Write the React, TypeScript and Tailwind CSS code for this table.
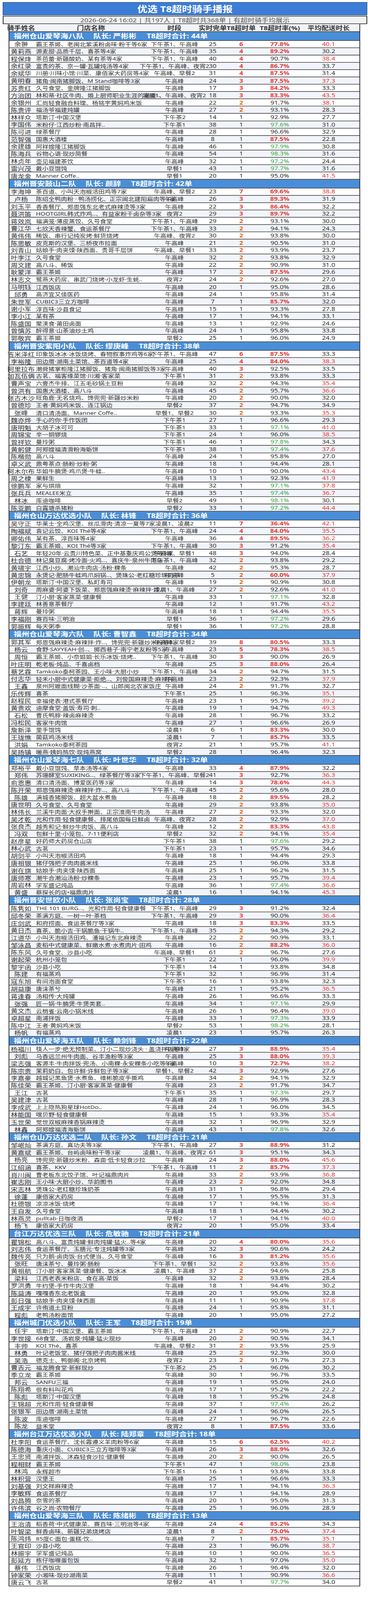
import React, { useLayoutEffect, useState } from "react";

type Team = { name: string; lead: string; total: number; rows: string };

const teams: Team[] = [
  {
    name: "福州仓山爱琴海八队", lead: "严彬彬", total: 44, rows: `
余翀|霸王茶姬、老闽北紫溪粉卤味·粉干等6家|下午茶1、午高峰|25|6|77.8|40.1
黄莉燕|源麦甜·品质千层、喜茶等4家|下午茶1、午高峰|35|4|89.2|30.2
程保烽|茶芭蕾·新疆酸奶、某有茶等4家|下午茶1、午高峰|40|4|90.7|38.4
余红录|富贵的茶、京一罐·瓦罐炖汤等4家|下午茶1、午高峰、夜宵2|30|4|86.7|33.7
余斌华|川册·川味小馆·川菜、康佰家大药房等4家|午高峰、早餐2|31|4|87.5|31.4
黄明春|猪角·闽南猪脚饭、M Stand咖啡等3家|午高峰|24|3|87.5|37.3
苏贵红|久号食堂、金牌隆江猪脚饭|午高峰|17|3|84.2|33.3
方治团|林和蒂·社区牛肉、婚上厨师职业生涯的撤退!..|凌晨1、午高峰、夜宵2|18|3|83.3|43.5
余银州|汇尚轻食融合料理、杨铭宇黄焖鸡米饭|午高峰|22|2|91.7|38.1
陈贵评|福汤爷福建炖罐|午高峰|27|2|93.1|28.3
林祥众|塔斯汀·中国汉堡|下午茶2|14|1|92.9|27.7
李国伟|米粉仔·江西炒粉·南昌拌..|下午茶1|38|1|97.6|31.0
陈可进|绿茶餐厅|午高峰|28|1|96.6|32.9
范智强|国惠大酒楼|午高峰|8|1|87.5|22.8
余建雄|阿祥嫂隆江猪脚饭|午高峰|46|1|97.9|30.8
陈海兵|谷物心语·现炒简餐|午高峰|54|1|98.3|31.6
林贞年|壶见福建茶饮|午高峰|32|1|97.2|24.4
雷兴茂|戴小豆馄饨|早餐1|43|1|97.7|31.6
唐龙金|Manner Coffe..|早餐1|20|1|95.0|41.5`,
  },
  {
    name: "福州晋安鼓山二队", lead: "颜辞", total: 42, rows: `
李海坤|茶百道、小叫天泡椒活田鸡等7家|午高峰、早餐2|23|7|69.6|38.8
卢杨|陈绍全鸭肉粉 · 鸭汤捞化、正宗闽北建阳扁肉等3家|午高峰|26|3|89.3|31.9
刘玉平|香香餐厅、郑恩强东北老式麻辣烫等3家|午高峰|22|3|86.4|32.2
聂洪笛|HOOTGIRL韩式炸鸡..、有益家粉干卤杂等3家|夜宵2|29|3|89.7|32.2
蒋效岚|福满笼·薄皮蒸饺、久号食堂|下午茶1、午高峰|29|2|93.1|30.0
曹江华|七欣天香辣蟹、食运茶餐厅|下午茶1、午高峰|33|2|94.1|24.3
黄伟伟|稀饭、串行记纯炭烤·鲜货烧烤|午高峰、夜宵2|30|2|93.8|30.0
陈思敏|皮克斯的汉堡、三桥夜市拉面|午高峰|21|2|90.5|31.0
刘青山|姑娘手·肉夹馍·陕西面、贵哥千层饼|午高峰、早餐1|33|2|93.9|23.7
叶李江|久号食堂|午高峰|32|2|93.8|32.9
周文建|高八斗、稀饭|午高峰|22|2|90.9|31.0
耿蒙洋|霸王茶姬|午高峰|17|2|87.5|29.6
林志文|鹭燕大药房、串武门烧烤·小龙虾·生蚝..|夜宵2|24|2|92.6|27.0
马明钰|江西饭店|午高峰|20|1|95.0|28.6
邱勇|高济宜又佳医药|午高峰|24|1|95.8|31.4
朱世军|CUBIC3三立方咖啡|午高峰|7|1|85.7|32.0
谢小军|淳百味·沙县食记|午高峰|15|1|93.3|27.8
李小江|某有茶|午高峰|17|1|94.1|33.1
陈盛国|聚渼食·莆田卤面|午高峰|13|1|92.9|24.6
曾慎苏|醉得意·山茶油炒土鸡|午高峰|24|1|95.8|33.8
郭敬宾|霸王茶姬|早餐2|25|1|96.0|24.9`,
  },
  {
    name: "福州晋安紫阳小队", lead: "缪庚峰", total: 38, rows: `
吉米泽红|印象饭冰冰·冰饭烧烤、春物叙事炸鸡等6家|下午茶1、午高峰|47|6|87.5|33.3
李裕隆|田边厝·湖南土菜馆、茶百道等4家|午高峰|25|4|84.0|38.3
阿里拉布|潮舜猪掌柜隆江猪脚饭、猪角·闽南猪脚饭等3家|午高峰|40|3|92.5|33.5
加瓦伍俩|古茗、福客缘菜馆·川湘·客家菜|下午茶1|31|2|93.8|33.3
曹声宝|六壹杰牛排、江五毛砂锅土豆粉|午高峰|32|2|94.3|35.4
曾洪有|国惠大酒楼、高八斗|午高峰|45|2|95.7|36.6
张古木沙|旺角鹿·无名烧鸡、馋兜兜·新疆炒米粉|午高峰|20|2|90.0|32.0
曾德珍|王者·黄焖鸡米饭、连江锅边|早餐2|37|2|94.7|34.9
张峰|清口清汤面、Manner Coffe..|早餐1、早餐2|30|2|93.3|35.3
魏亦烨|手心的你·手作饭团|下午茶1|27|1|96.6|29.3
唐明魁|大胡子冰可可|下午茶1|33|1|97.1|41.0
周锦宝|辛一铜锣烧|下午茶1|24|1|96.0|38.5
曾祥钦|曼玲粥|下午茶1|46|1|97.8|34.3
黄躬健|阿郑嫂福清滑粉海蛎饼|下午茶1|38|1|97.4|37.6
陈楷勋|高八斗|午高峰|24|1|95.8|27.0
卓义武|鼎粤茶点·肠粉·炒粉·粥|午高峰|18|1|94.4|28.1
阿木尔布|华姐牛腩煲·鸡爪煲·牛蛙..|午高峰|10|1|90.0|43.4
周之棣|果鲜生|午高峰|13|1|92.3|41.9
徐鹏军|家与烘焙|午高峰|32|1|97.1|37.8
张兵兵|MEALEE米立|午高峰|35|1|97.4|36.7
林冰|库迪咖啡|早餐2|49|1|98.1|30.1
陈亚鹏|白露塘杀猪粉|早餐2|33|1|97.2|44.4`,
  },
  {
    name: "福州仓山万达优选小队", lead: "林锋", total: 36, rows: `
吴守正|华莱士·全鸡汉堡、丝瓜滑肉·清凉一夏等7家|凌晨1、凌晨2|11|7|36.4|42.1
陶福斌|袁记云饺、KOI Thé等4家|下午茶1、午高峰|24|4|84.0|35.5
卿佑伟|某有茶、淳百味等4家|午高峰|36|4|89.5|36.2
黎汀东|霸王茶姬、KOI Thé等3家|下午茶1、午高峰|30|3|91.2|35.4
石艺|年轻20年·云贵川特色菜、正中基重庆鸡公煲等3家|午高峰、早餐1|48|3|94.0|28.4
杜合德|林记臭豆腐·烤冷面·火鸡..、喜庆牛·泉州牛肉店|下午茶1、午高峰|32|2|93.8|29.2
黄啸宇|江西小炒、潮汕牛肉店·汤粉·粿条|午高峰|42|2|95.3|28.7
黄忠锦|永煲记·肥肠牛蛙鸡爪焖锅..、煲珠公·老红糖珍珠奶茶|午高峰|5|2|60.0|37.9
伊朝龙|塔斯汀·中国汉堡、私町寿司|午高峰|19|2|90.9|30.8
刘奇|周麻婆·阿婆下饭菜、郑恩强麻辣烫·麻辣拌·炸..|凌晨1、午高峰|27|2|92.6|41.0
王健|汀小厨·客家蒸菜·健康餐|午高峰|33|1|97.1|32.8
李建廷|林善意茶餐厅|午高峰|12|1|91.7|43.2
蒋辉|曼玲粥|午高峰|18|1|94.4|35.5
李福刚|赛百味·三明治|早餐1|36|1|97.2|29.6
郭振辉|每天粥季|早餐1|36|1|97.2|28.8`,
  },
  {
    name: "福州仓山爱琴海六队", lead: "曹智鑫", total: 34, rows: `
郭其军|郑恩强麻辣烫·麻辣拌·炸..、馋兜兜·新疆炒米粉等8家|午高峰、早餐2|39|8|80.5|33.3
杨云|食野·SAYYEAH·创..、掷西巷子·南宁老友粉等5家|午高峰|23|5|78.3|38.5
周恒|霸王茶姬、小奈姐姐·长乐冰饭·烧烤..|下午茶1、午高峰|30|3|90.0|26.9
叶庄明|乾老板·炖品、千喜卤档|午高峰|25|3|88.0|26.4
蔡艺霖|Tamkoko泰柯茶园、王小味·大厨小炒|下午茶1、午高峰|34|2|94.7|31.5
付志华|轻禾小厨中式健康菜·拒绝..、刘俊国麻辣烫·麻辣拌|午高峰|23|2|92.3|37.9
王鑫|泉州阿嬷面线糊·沙茶面·..、山郎闽北农家饭庄|午高峰|24|2|91.7|32.7
乐传辉|喜茶|下午茶1|25|1|96.3|35.1
赵程民|幸福佬表·港式茶餐厅|午高峰|23|1|95.7|39.2
黄贵欢|迪摩食堂·盖饭·寿司·刺..|午高峰|19|1|94.7|49.3
石松|曹氏鸭脖·辣卤麻辣烫|午高峰|28|1|96.7|33.2
冯松民|客家牛肉馆|午高峰|27|1|96.6|26.9
詹新泽|里手馄饨|凌晨1|6|1|83.3|30.0
王珑憔|菌菇鸡汤米线|凌晨1|7|1|85.7|33.5
洪娟|Tamkoko泰柯茶园|夜宵2|21|1|95.7|41.1
吴扬镇|暖燕·姨妈热饮·现炖燕窝|早餐2|28|1|96.4|32.3`,
  },
  {
    name: "福州仓山爱琴海七队", lead: "叶世华", total: 32, rows: `
郑裕平|戴小豆馄饨、草本汤等4家|午高峰|33|4|87.9|32.2
郑伟|苏珊酵室SUXIKING..、绿茶餐厅等3家|下午茶1、午高峰、早餐2|41|3|92.7|36.3
俞恩惠|清口清汤面、博爱医药等3家|午高峰|14|3|78.6|44.3
陈开荣|郑恩强麻辣烫·麻辣拌·炸..、高八斗|下午茶1、午高峰|45|2|95.6|28.0
陈雄|满城香猪脚饭、超大盆水煮鱼|午高峰|18|2|89.5|28.2
唐世明|久号食堂、久号食堂|午高峰|29|2|93.8|35.0
林伟长|兰溪牛肉面·大叔手擀面、正宗淮南牛肉汤|午高峰|27|2|93.3|32.0
吴才乾|光和作用·轻食健康餐、排尾依国每日鲜卤|午高峰、夜宵2|28|2|92.9|37.0
张良杰|越秀和记·鲜炒牛肉饭、高八斗|午高峰|12|2|83.3|43.8
冯双|包鲜十里·小笼包、7-11便利店|早餐2|32|2|94.1|35.4
赵彦星|好药师大药房仓山店|下午茶1|38|1|97.6|29.2
林心武|古茗|下午茶1|23|1|95.7|34.6
胡剑平|小叫天泡椒活田鸡|午高峰|18|1|94.4|29.3
唐祖银|猪仔强把子肉肉酱米线|午高峰|25|1|96.0|33.8
谢在旗|姑娘手·肉夹馍·陕西面|午高峰|25|1|96.2|31.5
唐师寒|潮牛合潮汕汤粉·炒粿条|午高峰|23|1|95.7|39.4
周岩林|学军盛记炖品|午高峰|36|1|97.4|36.6
黄盛|蔡探长的店•福鼎肉片|凌晨1|16|1|94.1|45.3`,
  },
  {
    name: "福州晋安世欧小队", lead: "张尚宝", total: 28, rows: `
陈隽如|THE 101 BURG..、光和作用·轻食健康餐|下午茶1、午高峰|29|3|91.2|32.4
邱冬荣|茶满方庭、一树一叶·茶档|下午茶1、午高峰|29|3|90.0|36.4
庄剑武|和府捞面、食运茶餐厅等3家|午高峰|18|3|83.3|33.5
黄日杰|喜茶、脆小吉·干锅脆鱼·干锅牛..|下午茶1、午高峰|35|2|94.3|29.2
江道华|小叫天泡椒活田鸡、潘福记东北麻辣烫|午高峰|22|2|90.9|33.1
邹泳昌|麦稻中式健康菜、鲜嫩水煮·水煮肉片·田鸡|午高峰|16|2|88.2|36.0
陈东风|久号食堂、沙县小吃|午高峰、早餐1|61|2|96.7|27.6
谢起荣|杭州小笼包|下午茶1|22|1|96.0|39.9
黎宇函|沙县小吃|下午茶1|14|1|93.8|34.8
陈建|有福蒸鸡|下午茶1|32|1|96.9|31.4
寇东旭|有间泡面食堂|下午茶1|16|1|93.8|32.3
胡益康|唐沫茶兮|午高峰|21|1|95.2|36.5
蒋逢春|汤相传·大炖罐|午高峰|26|1|96.6|33.3
张强|匠一锅·牛腩煲·牛煲类套..|午高峰|34|1|97.1|29.9
黄文杰|云梢雀·云南小锅米线|午高峰|26|1|96.4|39.0
卓超星|南浦拌饭|午高峰|33|1|97.3|33.9
陈中江|王者·黄焖鸡米饭|早餐2|53|1|98.2|28.1
杨帆|有福蒸鸡|凌晨1|23|1|95.7|26.3`,
  },
  {
    name: "福州仓山爱琴海五队", lead: "赖剑锋", total: 22, rows: `
杨福川|筷人一步·绝无预制菜、汀小二现炒浇头 · 盖浇拌饭等3家|午高峰|27|3|88.9|35.4
刘彪|马香远兰州牛肉面、谷丰渔粉等3家|午高峰|25|3|88.0|39.3
梁志强|客源丰·牛肉拌饭·兜汤、小南粿·永安粿条小吃等3家|午高峰|10|3|72.7|38.2
陈宗贵|茉莉奶白、包许鲜·许鲜包子等3家|早餐1、早餐2|42|3|92.9|27.6
李嘉豪|越城记黑鱼煲·水煮鱼、维彬脆皮手撕鸡|午高峰|34|2|94.1|32.9
陈佳荣|霸王茶姬、汀小厨·客家蒸菜·健康餐|午高峰|23|2|91.7|34.7
王江|古茗|下午茶1|35|1|97.3|29.7
吴建津|古茗|午高峰|28|1|96.9|28.3
李成武|上上隐热狗星球HotDo..|午高峰|24|1|96.0|34.5
林能国|嘿贝野·轻食健康餐|午高峰|15|1|93.3|35.4
玉世荣|觉世双椒麻辣香锅麻辣烫|午高峰|32|1|96.9|32.9
林鑫|阿郑嫂福清海蛎饼|午高峰|43|1|97.8|32.6`,
  },
  {
    name: "福州仓山万达优选二队", lead: "孙文", total: 21, rows: `
邹岷灿|茶满方庭、真功夫等3家|下午茶1、午高峰|27|3|88.9|31.2
黄嘉斌|霸王茶姬、台屿卤味粉干等3家|凌晨1、午高峰、夜宵2|61|3|95.1|34.3
杨亮|馋兜兜·新疆炒米粉、森亩·低卡轻食沙拉|午高峰|24|3|88.0|45.6
江绍涵|喜茶、KKV|下午茶1、午高峰|11|2|85.7|37.3
肖川闽|曹老板东北饺子馆、叶记福鼎肉片|午高峰|33|2|93.9|36.8
崔志刚|王小味·大厨小炒、华韵图书|午高峰|23|2|92.0|34.8
宋志林|煲珠公·老红糖珍珠奶茶|午高峰|31|1|96.8|29.4
徐蓬|康佰家大药房|午高峰|17|1|95.5|31.3
杜德银|凉凉冰饭·烧烤|午高峰|17|1|94.1|36.4
王自发|久号食堂|午高峰|18|1|94.4|30.2
林燕灵|pulltab·日咖夜酒|早餐2|17|1|94.1|40.0
杨飞|康佰家大药房|夜宵2|20|1|95.0|33.4`,
  },
  {
    name: "台江万达优选三队", lead: "危敏驰", total: 21, rows: `
瞿锦松|高八斗、富贵炖罐·鲜肉炖罐·猛火..等4家|午高峰|20|4|80.0|35.6
刘志伟|食运茶餐厅、玉膳元·专注炖罐等3家|午高峰|32|3|90.6|24.2
魏传亮|只为鹅·卤肉饭·台式便当、久号食堂|午高峰|16|3|81.2|35.6
张旺|唐沫茶兮、曼玲粥·肠粉|下午茶1、早餐1|32|2|93.8|35.6
黄祖航|汀小厨·客家蒸菜·健康餐、饭冰冰|凌晨1、午高峰|37|2|94.6|25.8
梁科|江西老表米粉店、食在高·菜饭|午高峰|32|2|93.8|28.4
罗洪勇|牛约堡-手作牛肉汉堡|午高峰|18|1|94.4|30.2
陈益涛|嘎嘎香东北老饭盒|午高峰|20|1|95.0|32.8
彭日强|姑娘手·肉夹馍·陕西面|午高峰|11|1|90.9|37.8
王成宇|许侑道土豆粉|午高峰|24|1|95.8|31.1
程彪|老鸭汤粉面馆|午高峰|20|1|95.0|27.2`,
  },
  {
    name: "福州城门优选小队", lead: "王军", total: 19, rows: `
任宇|塔斯汀·中国汉堡、霸王茶姬|下午茶1、午高峰|21|2|90.9|22.7
李世接|68食堂、汤岩泉·炖罐·猛火现炒|午高峰|20|2|90.5|34.1
丰帅|KOI Thé、喜茶|午高峰、早餐2|31|2|93.5|25.9
林勇|叶记老饭堂、猪仔强把子肉肉酱米线|午高峰|25|2|92.3|30.0
吴浩|德克士、鸭御阁·北京烤鸭|夜宵2|23|2|91.7|27.3
曹吉元|福龙腾食堂·新鲜现炒|下午茶2|25|1|96.0|30.2
季立龙|霸王茶姬|午高峰|30|1|96.7|33.5
邦云|SANFU三福|午高峰|19|1|95.0|24.0
陈翔希|很有料叫花鸡|午高峰|17|1|95.2|22.2
陈彪|塔斯汀·中国汉堡|午高峰|18|1|95.2|24.8
王锦超|光和作用·轻食健康餐|午高峰|37|1|97.4|26.2
张银军|田边厝·湖南土菜馆|午高峰|24|1|96.0|26.5
陈波|库迪咖啡|午高峰|27|1|96.7|22.6
陈龙|益禾堂|夜宵2|8|1|87.5|33.6`,
  },
  {
    name: "福州台江万达优选小队", lead: "陆郑章", total: 18, rows: `
杜李阳|食运茶餐厅、沈长霞遵义羊肉粉等6家|午高峰|15|6|62.5|40.2
陈德海|重庆小面、CUBIC3三立方咖啡等3家|午高峰|26|3|88.9|32.6
王忠贤|南浦拌饭、沐森轻食沙拉·健康餐|午高峰|20|2|90.0|26.5
程相财|霸王茶姬|下午茶1|47|1|98.0|23.8
林鸿|永辉超市|下午茶1|16|1|93.8|33.8
林积营|汉堡王|午高峰|25|1|96.6|33.3
刘基强|刘文祥麻辣烫|午高峰|17|1|94.1|36.3
李敏辉|食运茶餐厅|午高峰|17|1|94.1|28.9
刘昌腾|奈雪的茶|午高峰|20|1|95.0|31.3
许伟滨|谷之尚·农物餐厅|午高峰|25|1|96.0|28.9`,
  },
  {
    name: "福州仓山爱琴海三队", lead: "陈绪彬", total: 13, rows: `
王治清|稻香荷·中式健康菜、赛百味·三明治等4家|午高峰|24|4|85.2|34.3
叶智梁|鲜香卤味、新疆兄弟烧烤店|凌晨1|8|2|75.0|37.4
陈鸿炜|85度C·面包·蛋糕·饮..|午高峰|7|1|85.7|35.1
王官印|沙县小吃|午高峰|23|1|96.0|38.7
林振宇|学军盛记炖品|午高峰|10|1|90.0|36.5
彭延方|栋仔咖喱蛋包饭|午高峰|32|1|97.0|35.0
蔡伟|江西饭店|午高峰|26|1|96.4|32.0
钟家荣|小湘味-现炒湖南菜|午高峰|11|1|90.9|36.6
唐云飞|古茗|早餐2|41|1|97.7|34.0`,
  },
];

function countClass(n: number) {
  if (n >= 3) return "text-[#e53a3a] font-bold";
  if (n === 2) return "text-[#ea5e0c] font-bold";
  return "text-[#333333]";
}

function rateClass(r: number) {
  if (r < 90) return "text-[#e53a3a] font-bold";
  if (r > 97.0) return "text-[#3aa846]";
  return "text-[#333333]";
}

function avgClass(a: number) {
  if (a >= 35) return "text-[#e53a3a]";
  return "text-[#333333]";
}

function DataRow({ line, idx }: { line: string; idx: number }) {
  const [name, store, time, done, ot, rate, avg] = line.split("|");
  return (
    <div
      className={
        "flex h-[23.1px] border-b-2 border-[#333333] text-[#333333] " +
        (idx % 2 === 0 ? "bg-white" : "bg-[#f1f4fa]")
      }
    >
      <div className="w-[60px] shrink-0 flex items-center justify-center whitespace-nowrap text-[17.5px] leading-[20px]">
        {name}
      </div>
      <div className="w-[298px] shrink-0 flex items-center justify-start pl-[8px] whitespace-nowrap text-[16px] leading-[20px]">
        {store}
      </div>
      <div className="w-[130px] shrink-0 flex items-center justify-center whitespace-nowrap text-[16px] leading-[20px]">
        {time}
      </div>
      <div className="w-[66px] shrink-0 flex items-center justify-center text-[17px] leading-[20px]">{done}</div>
      <div className={"w-[80px] shrink-0 flex items-center justify-center text-[17px] leading-[20px] " + countClass(Number(ot))}>
        {ot}
      </div>
      <div className={"w-[118px] shrink-0 flex items-center justify-center text-[17px] leading-[20px] " + rateClass(Number(rate))}>
        {rate}%
      </div>
      <div className={"w-[132px] shrink-0 flex items-center justify-center text-[17px] leading-[20px] " + avgClass(Number(avg))}>
        {avg}
      </div>
    </div>
  );
}

function TeamBlock({ team }: { team: Team }) {
  const lines = team.rows.trim().split("\n");
  return (
    <>
      <div className="flex items-center h-[27.5px] bg-[#4a8ed8] border-b-2 border-[#333333] pl-[11px] text-white font-bold text-[20px] leading-[22px] whitespace-nowrap">
        <span>{team.name}</span>
        <span className="ml-[24px]">队长: {team.lead}</span>
        <span className="ml-[26px]">T8超时合计: {team.total}单</span>
      </div>
      {lines.map((l, i) => (
        <DataRow key={i} line={l} idx={i} />
      ))}
    </>
  );
}

const PAGE_H = 5051;

export default function App() {
  const [scale, setScale] = useState(1);
  useLayoutEffect(() => {
    const h = window.innerHeight;
    if (h > 0 && h < PAGE_H) setScale(h / PAGE_H);
  }, []);

  return (
    <div className="w-[943px] overflow-hidden bg-white" style={{ height: PAGE_H * scale }}>
      <div
        className="w-[943px] h-[5051px] bg-white font-['Noto_Sans','Noto_Sans_CJK_SC',sans-serif] pt-[7px] origin-top-left"
        style={{ transform: `scaleY(${scale})` }}
      >
        <div className="ml-[7px] w-[934px] h-[41px] bg-[#3b7dd7] border border-[#1d2b48] flex items-center justify-center text-white font-bold text-[26px] leading-none">
          优选 T8超时骑手播报
        </div>
        <div className="ml-[7px] mt-[2px] w-[934px] h-[26px] bg-[#f1f2f6] border-2 border-[#2b2b2b] flex items-center justify-center text-[#555555] text-[18px] leading-none whitespace-nowrap">
          2026-06-24 16:02 | 共197人 | T8超时共368单 | 有超时骑手均展示
        </div>
        <div className="ml-[22px] w-[901px] border-x-2 border-[#333333]">
          <div className="flex h-[25px] bg-[#f2f3f7] border-b-2 border-[#333333] text-[#333333] font-bold text-[18px] leading-[20px] whitespace-nowrap">
            <div className="w-[60px] shrink-0 flex items-center justify-center">骑手姓名</div>
            <div className="w-[298px] shrink-0 flex items-center justify-center">门店名称</div>
            <div className="w-[130px] shrink-0 flex items-center justify-center">时段</div>
            <div className="w-[66px] shrink-0 flex items-center justify-center">实时完单</div>
            <div className="w-[80px] shrink-0 flex items-center justify-center">T8超时单</div>
            <div className="w-[118px] shrink-0 flex items-center justify-center">T8超时率(%)</div>
            <div className="w-[132px] shrink-0 flex items-center justify-center">平均配送时长</div>
          </div>
          {teams.map((t) => (
            <TeamBlock key={t.name} team={t} />
          ))}
        </div>
      </div>
    </div>
  );
}
